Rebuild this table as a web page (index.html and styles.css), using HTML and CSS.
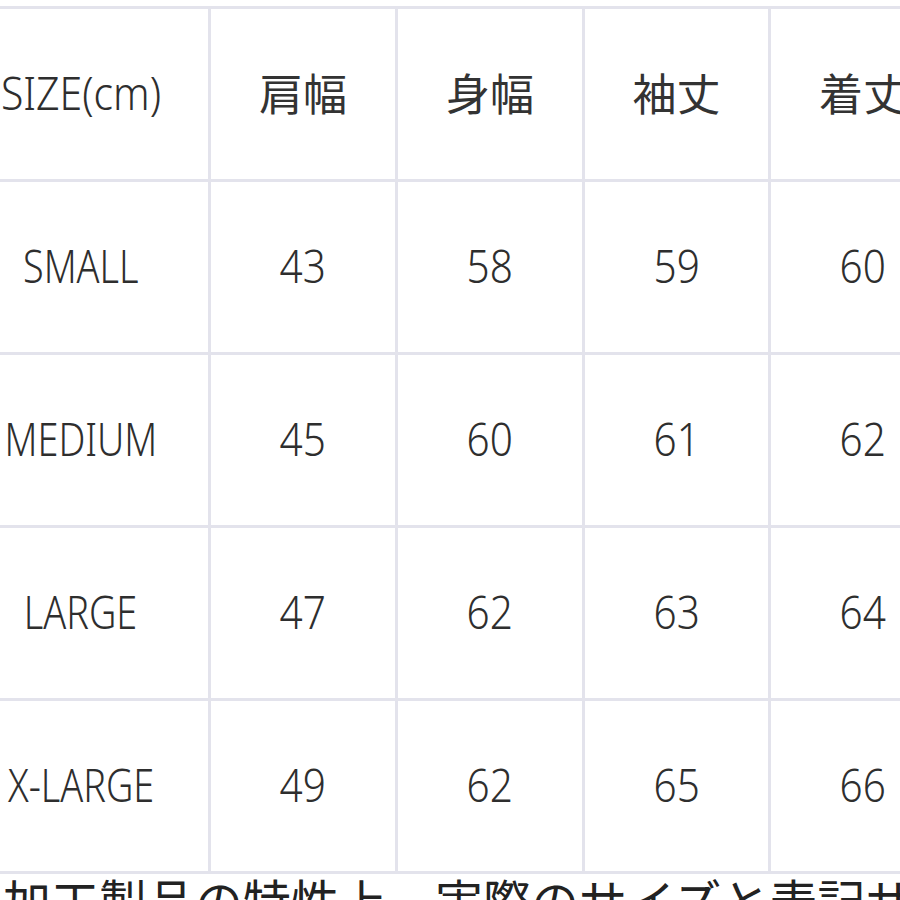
FILE: index.html
```html
<!DOCTYPE html>
<html lang="ja">
<head>
<meta charset="utf-8">
<link rel="stylesheet" href="styles.css">
</head>
<body>
<div class="sheet">
  <div class="grid">
    <div class="cell"><span class="word head">SIZE(cm)</span></div>
    <div class="cell">肩幅</div>
    <div class="cell">身幅</div>
    <div class="cell">袖丈</div>
    <div class="cell">着丈</div>

    <div class="cell"><span class="word">SMALL</span></div>
    <div class="cell"><span class="num">43</span></div>
    <div class="cell"><span class="num">58</span></div>
    <div class="cell"><span class="num">59</span></div>
    <div class="cell"><span class="num">60</span></div>

    <div class="cell"><span class="word">MEDIUM</span></div>
    <div class="cell"><span class="num">45</span></div>
    <div class="cell"><span class="num">60</span></div>
    <div class="cell"><span class="num">61</span></div>
    <div class="cell"><span class="num">62</span></div>

    <div class="cell"><span class="word">LARGE</span></div>
    <div class="cell"><span class="num">47</span></div>
    <div class="cell"><span class="num">62</span></div>
    <div class="cell"><span class="num">63</span></div>
    <div class="cell"><span class="num">64</span></div>

    <div class="cell"><span class="word">X-LARGE</span></div>
    <div class="cell"><span class="num">49</span></div>
    <div class="cell"><span class="num">62</span></div>
    <div class="cell"><span class="num">65</span></div>
    <div class="cell"><span class="num">66</span></div>
  </div>
  <p class="note">加工製品の特性上、実際のサイズと表記サイズに多少の誤差が生じる場合がございます。</p>
</div>
</body>
</html>
```

FILE: styles.css
```css
html, body {
  margin: 0;
  padding: 0;
  background: #ffffff;
  overflow: hidden;
  width: 900px;
  height: 900px;
}

.sheet {
  width: 900px;
  height: 900px;
  overflow: hidden;
  font-family: "Noto Sans CJK JP", "Noto Sans", sans-serif;
  color: #333333;
}

.grid {
  display: grid;
  grid-template-columns: 254px 184px 184px 183px 184px;
  grid-auto-rows: 170px;
  gap: 3px;
  padding: 3px;
  margin: 6px 0 0 -49px;
  width: max-content;
  background: #e3e3ec;
}

.cell {
  background: #ffffff;
  display: flex;
  align-items: center;
  justify-content: center;
  padding-bottom: 4px;
  box-sizing: border-box;
  font-size: 44px;
  line-height: 1;
  white-space: nowrap;
}

.word,
.num {
  display: inline-block;
  font-family: "Noto Sans", "Noto Sans CJK JP", sans-serif;
  font-weight: 300;
  font-size: 45px;
  color: #2e2e2e;
}

.word {
  transform: scaleX(0.84);
}

.word.head {
  transform: scaleX(0.91);
}

.num {
  transform: scaleX(0.9);
}

.note {
  margin: 1px 0 0 3px;
  font-size: 48px;
  line-height: 1;
  color: #222222;
  white-space: nowrap;
}
```
